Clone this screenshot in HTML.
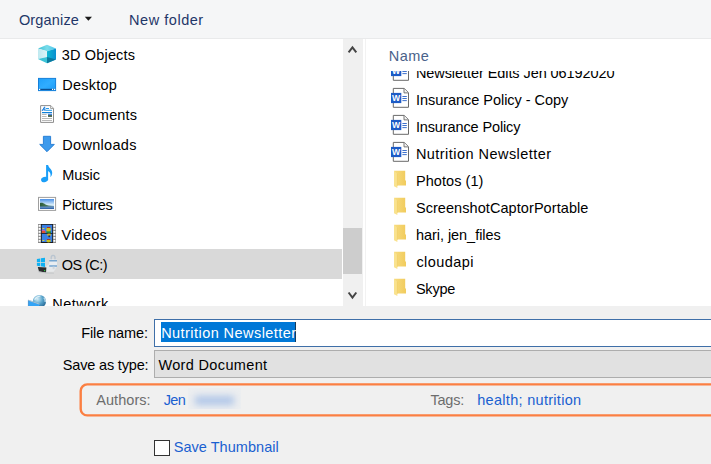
<!DOCTYPE html>
<html><head><meta charset="utf-8">
<style>
html,body{margin:0;padding:0;}
body{width:711px;height:464px;overflow:hidden;position:relative;background:#f0f0f0;font-family:"Liberation Sans",sans-serif;font-size:14.5px;color:#000;}
.abs{position:absolute;}
.t{position:absolute;white-space:nowrap;line-height:20px;height:20px;}
svg{position:absolute;overflow:visible;}
#toolbar{left:0;top:0;width:711px;height:38px;background:#f5f6f7;border-bottom:1px solid #e9eaeb;}
#left{left:0;top:39px;width:343px;height:267px;background:#fff;overflow:hidden;}
#lscroll{left:343px;top:39px;width:20px;height:267px;background:#f0f0f0;}
#split{left:363px;top:39px;width:3px;height:267px;background:#fff;border-right:0;box-shadow:inset -1px 0 0 #f2f2f2;}
#right{left:366px;top:39px;width:345px;height:267px;background:#fff;overflow:hidden;}
#list{left:0;top:32px;width:346px;height:240px;overflow:hidden;}
#bottom{left:0;top:306px;width:711px;height:158px;background:#f0f0f0;}
</style></head><body>
<div id="toolbar" class="abs"></div>
<div class="t" style="left:18.9px;top:9.7px;color:#1f3768;letter-spacing:0.17px;">Organize</div>
<svg style="left:80px;top:12px" width="16" height="12" viewBox="80 12 16 12"><polygon points="84.8,16.8 92,16.8 88.4,20.8" fill="#1a1a1a"/></svg>
<div class="t" style="left:129.1px;top:9.7px;color:#1f3768;letter-spacing:0.53px;">New folder</div>

<div id="left" class="abs">
  <div class="abs" style="left:0;top:210px;width:342px;height:30px;background:#d9d9d9;"></div>
  <div class="t" style="left:61.8px;top:5.6px;color:#000;letter-spacing:0.16px;">3D Objects</div><div class="t" style="left:62.3px;top:35.6px;color:#000;letter-spacing:0.24px;">Desktop</div><div class="t" style="left:62.3px;top:65.6px;color:#000;letter-spacing:0.18px;">Documents</div><div class="t" style="left:62.3px;top:95.6px;color:#000;letter-spacing:0.30px;">Downloads</div><div class="t" style="left:62.3px;top:125.6px;color:#000;letter-spacing:-0.04px;">Music</div><div class="t" style="left:62.3px;top:155.6px;color:#000;letter-spacing:-0.28px;">Pictures</div><div class="t" style="left:61.5px;top:185.6px;color:#000;letter-spacing:0.24px;">Videos</div><div class="t" style="left:61.8px;top:215.6px;color:#000;letter-spacing:-0.57px;">OS (C:)</div><div class="t" style="left:52.2px;top:255.0px;color:#000;letter-spacing:0.50px;">Network</div>
  <svg style="left:0;top:0" width="343" height="267" viewBox="0 39 343 267">
<defs>
<linearGradient id="gDesk" x1="0" y1="0" x2="1" y2="1"><stop offset="0" stop-color="#1e9ffa"/><stop offset="0.5" stop-color="#30adff"/><stop offset="1" stop-color="#1c9af6"/></linearGradient>
<linearGradient id="gSky" x1="0" y1="0" x2="0" y2="1"><stop offset="0" stop-color="#4a8fe6"/><stop offset="0.55" stop-color="#d4ebfa"/><stop offset="1" stop-color="#c0dcf0"/></linearGradient>
<linearGradient id="gCubeR" x1="0" y1="0" x2="1" y2="0"><stop offset="0" stop-color="#10b8d2"/><stop offset="1" stop-color="#0a8fd0"/></linearGradient>
<linearGradient id="gCubeT" x1="0" y1="0" x2="1" y2="0"><stop offset="0" stop-color="#3cc0d4"/><stop offset="0.5" stop-color="#7adcea"/><stop offset="1" stop-color="#48c4ec"/></linearGradient>
<linearGradient id="gCubeL" x1="0" y1="0" x2="1" y2="0"><stop offset="0" stop-color="#bfe9f0"/><stop offset="1" stop-color="#dff4f7"/></linearGradient>
<radialGradient id="gGlobe" cx="0.35" cy="0.3" r="0.8"><stop offset="0" stop-color="#d4edf7"/><stop offset="0.5" stop-color="#58a4cc"/><stop offset="1" stop-color="#1f5f8c"/></radialGradient>
<linearGradient id="gHill" x1="0" y1="0" x2="1" y2="0"><stop offset="0" stop-color="#2c5a38"/><stop offset="0.5" stop-color="#4a7a5a"/><stop offset="1" stop-color="#7fa0b8"/></linearGradient>
<linearGradient id="gFold" x1="0" y1="0" x2="1" y2="0"><stop offset="0" stop-color="#f7dc80"/><stop offset="1" stop-color="#f1cb5c"/></linearGradient>
</defs>
<polygon points="47,44.8 56,48.6 47,51.2 38,48.6" fill="url(#gCubeT)"/>
<polygon points="38,48.6 47,51.2 47,57 38,59" fill="url(#gCubeL)"/>
<polygon points="38,59 47,57 47,63.2" fill="#3cc3d6"/>
<polygon points="47,51.2 56,48.6 56,59.4 47,63.2" fill="url(#gCubeR)"/>
<polygon points="47,57 56,59.4 47,63.2" fill="#0b7296" opacity="0.85"/>
<rect x="38.5" y="78.4" width="17.1" height="12.2" fill="url(#gDesk)" stroke="#1680da" stroke-width="1"/>
<rect x="39" y="88.8" width="16" height="1.2" fill="#0b4f92"/>
<rect x="39" y="88.8" width="1.2" height="1.2" fill="#fff"/><rect x="52" y="88.8" width="1.2" height="1.2" fill="#fff"/><rect x="54" y="88.8" width="1.2" height="1.2" fill="#fff"/>
<path d="M40.6 105.6 H50.8 L53.5 108.3 V122.4 H40.6 Z" fill="#fff" stroke="#8e8e8e" stroke-width="1"/>
<path d="M50.6 105.8 V108.5 H53.3" fill="#f4f4f4" stroke="#8e8e8e" stroke-width="0.8"/>
<path d="M42 111 L44.6 106.8 L45.2 111 M42.6 109.8 H45" stroke="#1a7fe0" stroke-width="1" fill="none"/>
<rect x="46" y="108" width="3" height="1" fill="#2a9be8"/><rect x="46" y="109.8" width="6" height="1" fill="#2a9be8"/>
<rect x="42" y="112" width="10" height="1.2" fill="#1080d8"/>
<rect x="42" y="114" width="4.6" height="0.8" fill="#a8a8a8"/><rect x="42" y="116" width="4.6" height="0.8" fill="#a8a8a8"/><rect x="42" y="118" width="10" height="0.8" fill="#a8a8a8"/><rect x="42" y="120" width="10" height="0.8" fill="#a8a8a8"/>
<rect x="48" y="113.8" width="4" height="1.4" fill="#4d88e0"/><rect x="48" y="115.2" width="4" height="1.6" fill="#2a4a30"/>
<path d="M43.4 136.3 H50.6 V144.4 H54.3 L47 151.7 L39.7 144.4 H43.4 Z" fill="#3d9aec" stroke="#2079d2" stroke-width="0.9" stroke-linejoin="miter"/>
<ellipse cx="44.6" cy="179.5" rx="3.6" ry="2.6" transform="rotate(-20 44.6 179.5)" fill="#1a9ef8"/>
<rect x="46.1" y="165" width="2" height="14.5" fill="#1a9ef8"/>
<path d="M48 165 C48.6 168 52.6 169.5 52.2 173.2 C52 175.2 51.2 176.3 50.3 177 C50.9 174.8 50.8 172.6 48 171 Z" fill="#1a9ef8"/>
<rect x="38.5" y="197.4" width="17.1" height="13" fill="#fff" stroke="#9e9e9e" stroke-width="1"/>
<rect x="40" y="199" width="14" height="10" fill="url(#gSky)"/>
<path d="M40 203 C41.6 202.3 43.4 202.8 45 204.2 C47 205.4 50 205.7 54 206.1 V206.8 H40 Z" fill="url(#gHill)"/>
<rect x="40" y="206.6" width="14" height="2.4" fill="#3568ac"/><rect x="40" y="207.2" width="14" height="0.6" fill="#9fc0e0" opacity="0.6"/>
<rect x="38" y="224" width="18" height="19" fill="#8a8a8a"/>
<rect x="41" y="224" width="12" height="19" fill="#1c1c1c"/>
<rect x="41.8" y="224.8" width="10.4" height="8.2" fill="#3a80e4"/><rect x="41.8" y="233.8" width="10.4" height="8.2" fill="#3a80e4"/>
<rect x="38.6" y="224.9" width="2" height="1.9" fill="#fff"/><rect x="53.4" y="224.9" width="2" height="1.9" fill="#fff"/>
<rect x="38.6" y="227.9" width="2" height="1.9" fill="#fff"/><rect x="53.4" y="227.9" width="2" height="1.9" fill="#fff"/>
<rect x="38.6" y="230.9" width="2" height="1.9" fill="#fff"/><rect x="53.4" y="230.9" width="2" height="1.9" fill="#fff"/>
<rect x="38.6" y="233.9" width="2" height="1.9" fill="#fff"/><rect x="53.4" y="233.9" width="2" height="1.9" fill="#fff"/>
<rect x="38.6" y="236.9" width="2" height="1.9" fill="#fff"/><rect x="53.4" y="236.9" width="2" height="1.9" fill="#fff"/>
<rect x="38.6" y="239.9" width="2" height="1.9" fill="#fff"/><rect x="53.4" y="239.9" width="2" height="1.9" fill="#fff"/>
<ellipse cx="48.6" cy="229.6" rx="2.3" ry="2.6" fill="#c8c020"/><rect x="46.4" y="231.4" width="4.6" height="1.6" fill="#1f8a3a"/><rect x="47" y="227" width="3.2" height="1" fill="#b03020"/>
<rect x="41.8" y="231" width="3.6" height="2" fill="#e05030"/><rect x="41.8" y="229.8" width="3" height="1.2" fill="#c060b0"/><rect x="42.4" y="228" width="2" height="1" fill="#d8d040"/>
<ellipse cx="49" cy="234.8" rx="2" ry="1.4" fill="#d0b020"/><rect x="48.4" y="235.4" width="1.6" height="1.8" fill="#203050"/>
<ellipse cx="48.6" cy="240.8" rx="2.3" ry="1.6" fill="#c8c020"/><rect x="47" y="239" width="3.2" height="0.9" fill="#b03020"/><rect x="42.4" y="240" width="2" height="1" fill="#d8d040"/>
<path d="M46 266.6 L49.5 263.8 H55.6 V269 L53.6 271.8 H46.2 Z" fill="#e6e8ea"/>
<path d="M37.8 267 L46.4 267.4 L46 272.4 L39 271.4 Z" fill="#2b2d2f"/>
<path d="M38.2 271.2 L46 272.4 L54 272.8 L54 273.6 L46 273.6 L38.4 272.2 Z" fill="#bfc3c6"/>
<rect x="44" y="270" width="1.2" height="1.2" fill="#30c040"/>
<path d="M36.9 258.9 L40.2 258.4 V262 H36.9 Z M40.9 258.3 L45 257.7 V262 H40.9 Z M36.9 262.7 H40.2 V266.2 L36.9 265.7 Z M40.9 262.7 H45 V266.9 L40.9 266.3 Z" fill="#0fb0f2"/>
<path d="M51.2 260 V257.6 C51.2 254.6 55 254.6 55 257.6 V260" fill="none" stroke="#b8c4d0" stroke-width="1.3"/>
<rect x="49.2" y="259.4" width="7.8" height="8" rx="1" fill="#e9edf1"/>
<rect x="49.2" y="260.2" width="7.8" height="1.2" fill="#5a94c8"/><rect x="49.2" y="265.4" width="7.8" height="1.2" fill="#5a94c8"/>
<rect x="52.6" y="266.6" width="2" height="2.6" fill="#d0d6dc"/>
<circle cx="39.4" cy="301.5" r="6.6" fill="url(#gGlobe)"/>
<path d="M34.6 299.6 C36 297.4 38 296.2 40.4 296" stroke="#e6f4fa" stroke-width="1.2" fill="none" opacity="0.9"/>
<path d="M43.8 297.6 C45 299 45.4 300.6 45.2 302" stroke="#d6ecf6" stroke-width="1.4" fill="none" opacity="0.8"/>
<path d="M28.4 300.2 L39.6 304.2 V308 H28.4 Z" fill="#33a4f6" stroke="#2c7fc4" stroke-width="0.7"/>
<path d="M28.4 300.2 L39.6 304.2" stroke="#f2e6d8" stroke-width="0.6"/>
</svg>
</div>
<div id="lscroll" class="abs">
  <div class="abs" style="left:0;top:189px;width:19px;height:46px;background:#cdcdcd;"></div>
  <svg style="left:0;top:0" width="20" height="267" viewBox="0 0 20 267"><path d="M5.6 13.3 L9.45 8.45 L13.3 13.3" fill="none" stroke="#444" stroke-width="2"/><path d="M5.6 253.5 L9.45 258.5 L13.3 253.5" fill="none" stroke="#444" stroke-width="2"/></svg>
</div>
<div id="split" class="abs"></div>
<div id="right" class="abs">
  <div class="t" style="left:22.8px;top:6.6px;color:#4a628a;letter-spacing:0.47px;">Name</div>
  <div id="list" class="abs">
    <div class="t" style="left:49.9px;top:-8.3px;color:#000;letter-spacing:-0.07px;">Newsletter Edits Jen 06192020</div><div class="t" style="left:49.9px;top:18.7px;color:#000;letter-spacing:-0.03px;">Insurance Policy - Copy</div><div class="t" style="left:49.9px;top:45.7px;color:#000;letter-spacing:-0.12px;">Insurance Policy</div><div class="t" style="left:49.9px;top:72.7px;color:#000;letter-spacing:0.46px;">Nutrition Newsletter</div><div class="t" style="left:49.9px;top:99.7px;color:#000;letter-spacing:0.07px;">Photos (1)</div><div class="t" style="left:49.9px;top:126.7px;color:#000;letter-spacing:0.07px;">ScreenshotCaptorPortable</div><div class="t" style="left:49.9px;top:153.7px;color:#000;letter-spacing:-0.04px;">hari, jen_files</div><div class="t" style="left:50.4px;top:180.7px;color:#000;letter-spacing:0.45px;">cloudapi</div><div class="t" style="left:49.9px;top:207.7px;color:#000;letter-spacing:-0.20px;">Skype</div>
    <svg style="left:0;top:0" width="346" height="240" viewBox="366 71 346 240">
<path d="M393.3 61.4 H404.2 L408.5 65.7 V80.3 H393.3 Z" fill="#fff" stroke="#6a6a6a" stroke-width="1"/><path d="M404 61.6 V65.9 H408.3" fill="#f2f2f2" stroke="#6a6a6a" stroke-width="0.9"/><rect x="391" y="65.9" width="10.3" height="10.2" fill="#1d5bc6"/><text x="396.15" y="74.2" font-family="Liberation Sans, sans-serif" font-weight="bold" font-size="8.6" fill="#fff" text-anchor="middle">W</text><rect x="402.4" y="69.0" width="4.4" height="0.9" fill="#2a62c8"/><rect x="402.4" y="71.1" width="4.4" height="0.9" fill="#2a62c8"/><rect x="402.4" y="73.2" width="4.4" height="0.9" fill="#2a62c8"/>
<path d="M393.3 88.4 H404.2 L408.5 92.7 V107.3 H393.3 Z" fill="#fff" stroke="#6a6a6a" stroke-width="1"/><path d="M404 88.6 V92.9 H408.3" fill="#f2f2f2" stroke="#6a6a6a" stroke-width="0.9"/><rect x="391" y="92.9" width="10.3" height="10.2" fill="#1d5bc6"/><text x="396.15" y="101.2" font-family="Liberation Sans, sans-serif" font-weight="bold" font-size="8.6" fill="#fff" text-anchor="middle">W</text><rect x="402.4" y="96.0" width="4.4" height="0.9" fill="#2a62c8"/><rect x="402.4" y="98.1" width="4.4" height="0.9" fill="#2a62c8"/><rect x="402.4" y="100.2" width="4.4" height="0.9" fill="#2a62c8"/>
<path d="M393.3 115.4 H404.2 L408.5 119.7 V134.3 H393.3 Z" fill="#fff" stroke="#6a6a6a" stroke-width="1"/><path d="M404 115.6 V119.9 H408.3" fill="#f2f2f2" stroke="#6a6a6a" stroke-width="0.9"/><rect x="391" y="119.9" width="10.3" height="10.2" fill="#1d5bc6"/><text x="396.15" y="128.2" font-family="Liberation Sans, sans-serif" font-weight="bold" font-size="8.6" fill="#fff" text-anchor="middle">W</text><rect x="402.4" y="123.0" width="4.4" height="0.9" fill="#2a62c8"/><rect x="402.4" y="125.1" width="4.4" height="0.9" fill="#2a62c8"/><rect x="402.4" y="127.2" width="4.4" height="0.9" fill="#2a62c8"/>
<path d="M393.3 142.4 H404.2 L408.5 146.7 V161.3 H393.3 Z" fill="#fff" stroke="#6a6a6a" stroke-width="1"/><path d="M404 142.6 V146.9 H408.3" fill="#f2f2f2" stroke="#6a6a6a" stroke-width="0.9"/><rect x="391" y="146.9" width="10.3" height="10.2" fill="#1d5bc6"/><text x="396.15" y="155.2" font-family="Liberation Sans, sans-serif" font-weight="bold" font-size="8.6" fill="#fff" text-anchor="middle">W</text><rect x="402.4" y="150.0" width="4.4" height="0.9" fill="#2a62c8"/><rect x="402.4" y="152.1" width="4.4" height="0.9" fill="#2a62c8"/><rect x="402.4" y="154.2" width="4.4" height="0.9" fill="#2a62c8"/>
<path d="M394 170.8 H405.2 V180.4 H406 V185.6 H396 Z" fill="url(#gFold)"/><path d="M394 171.1 L397.4 173.4 V188.0 L394 186.2 Z" fill="#f9e28e"/><path d="M397.4 173.4 V185.8" stroke="#eec85a" stroke-width="0.5"/>
<path d="M394 197.8 H405.2 V207.4 H406 V212.6 H396 Z" fill="url(#gFold)"/><path d="M394 198.1 L397.4 200.4 V215.0 L394 213.2 Z" fill="#f9e28e"/><path d="M397.4 200.4 V212.8" stroke="#eec85a" stroke-width="0.5"/>
<path d="M394 224.8 H405.2 V234.4 H406 V239.6 H396 Z" fill="url(#gFold)"/><path d="M394 225.1 L397.4 227.4 V242.0 L394 240.2 Z" fill="#f9e28e"/><path d="M397.4 227.4 V239.8" stroke="#eec85a" stroke-width="0.5"/>
<path d="M394 251.8 H405.2 V261.4 H406 V266.6 H396 Z" fill="url(#gFold)"/><path d="M394 252.1 L397.4 254.4 V269.0 L394 267.2 Z" fill="#f9e28e"/><path d="M397.4 254.4 V266.8" stroke="#eec85a" stroke-width="0.5"/>
<path d="M394 278.8 H405.2 V288.4 H406 V293.6 H396 Z" fill="url(#gFold)"/><path d="M394 279.1 L397.4 281.4 V296.0 L394 294.2 Z" fill="#f9e28e"/><path d="M397.4 281.4 V293.8" stroke="#eec85a" stroke-width="0.5"/>
</svg>
  </div>
</div>
<div id="bottom" class="abs"></div>
<div class="t" style="left:81.2px;top:323.0px;color:#000;letter-spacing:-0.09px;">File name:</div>
<div class="abs" style="left:154px;top:319px;width:560px;height:25.5px;background:#fff;border:1px solid #3f6fa8;"></div>
<div class="abs" style="left:161px;top:322px;width:134.6px;height:20px;background:#0078d7;"></div>
<div class="abs" style="left:295px;top:322px;width:1px;height:20px;background:#1c2c3c;opacity:.8"></div>
<div class="t" style="left:161.2px;top:323.0px;color:#fff;letter-spacing:0.44px;">Nutrition Newsletter</div>
<div class="t" style="left:62.8px;top:355.0px;color:#000;letter-spacing:-0.17px;">Save as type:</div>
<div class="abs" style="left:154px;top:350px;width:560px;height:25.5px;background:#e1e1e1;border:1px solid #adadad;"></div>
<div class="t" style="left:158.4px;top:355.0px;color:#000;letter-spacing:0.35px;">Word Document</div>
<svg style="left:70px;top:376px" width="641" height="48" viewBox="70 376 641 48"><rect x="80.7" y="384.4" width="660" height="31" rx="6.5" ry="6.5" fill="none" stroke="#fb7f42" stroke-width="2.4"/></svg>
<div class="t" style="left:96.2px;top:390.0px;color:#6d6d6d;letter-spacing:0.06px;">Authors:</div><div class="t" style="left:163.8px;top:390.0px;color:#1a60d0;letter-spacing:-0.70px;">Jen</div>
<div class="abs" style="left:188px;top:388px;width:52.5px;height:20.5px;background:#eceef0;overflow:hidden;"><div class="abs" style="left:7px;top:7.5px;width:39px;height:9px;background:#b0c6e8;filter:blur(3.5px);"></div></div>
<div class="t" style="left:430.4px;top:390.0px;color:#6d6d6d;letter-spacing:-0.20px;">Tags:</div><div class="t" style="left:477.2px;top:390.0px;color:#1a60d0;letter-spacing:0.30px;">health; nutrition</div>
<div class="abs" style="left:154px;top:440px;width:14px;height:14px;background:#fff;border:1px solid #333;"></div>
<div class="t" style="left:173.7px;top:436.8px;color:#1a60d0;letter-spacing:0.04px;">Save Thumbnail</div>
</body></html>
